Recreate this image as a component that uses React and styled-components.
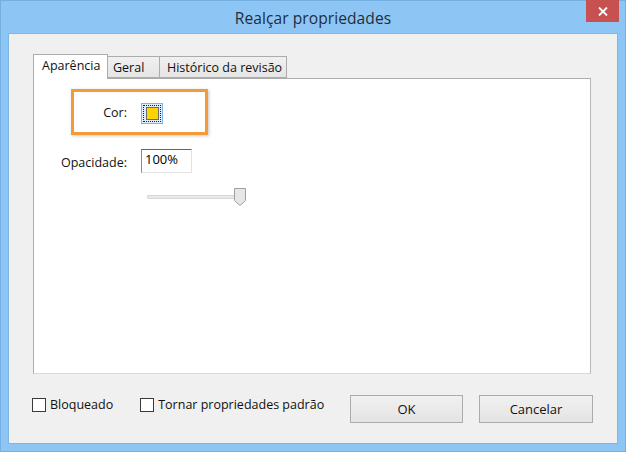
import React from "react";
import styled, { createGlobalStyle } from "styled-components";

const GlobalStyle = createGlobalStyle`
  html, body { margin: 0; padding: 0; background: #8dc6f5; }
  body { font-family: "Open Sans", "Noto Sans", sans-serif; }
  * { box-sizing: border-box; }
`;

const Window = styled.div`
  width: 626px;
  height: 452px;
  display: flex;
  flex-direction: column;
  background: #8dc6f5;
  border: 1px solid #74afe2;
  padding: 0 7px 7px 7px;
`;

const TitleBar = styled.div`
  height: 32px;
  display: grid;
  grid-template-columns: 1fr auto 1fr;
  align-items: center;
`;

const Title = styled.div`
  grid-column: 2;
  font-size: 15.6px;
  color: #1e2e3e;
  padding-top: 2px;
  letter-spacing: 0.05px;
`;

const CloseButton = styled.div`
  grid-column: 3;
  justify-self: end;
  align-self: start;
  width: 33px;
  height: 22px;
  margin-top: -1px;
  margin-right: -1px;
  background: #c75050;
  display: flex;
  align-items: center;
  justify-content: center;
`;

const Client = styled.div`
  flex: 1;
  display: flex;
  flex-direction: column;
  background: #f0f0f0;
  border: 1px solid #7fb6e6;
  padding: 20px 26px 20px 24px;
  font-size: 12.5px;
  color: #111;
`;

const TabStrip = styled.div`
  display: flex;
  align-items: flex-end;
  height: 24px;
  position: relative;
  z-index: 1;
`;

const Tab = styled.div`
  width: ${(p) => p.$w}px;
  height: ${(p) => (p.$active ? 25 : 22)}px;
  margin-bottom: ${(p) => (p.$active ? -1 : 0)}px;
  padding-left: ${(p) => p.$pl}px;
  display: flex;
  align-items: center;
  padding-bottom: ${(p) => (p.$active ? 3 : 0)}px;
  white-space: nowrap;
  border: 1px solid #acacac;
  border-bottom: ${(p) => (p.$active ? "none" : "1px solid #acacac")};
  border-left: ${(p) => (p.$first ? "1px solid #acacac" : p.$active ? "1px solid #acacac" : "none")};
  background: ${(p) =>
    p.$active ? "#ffffff" : "linear-gradient(#f0f0f0, #e5e5e5)"};
  color: #111;
`;

const Panel = styled.div`
  flex: 1;
  background: #ffffff;
  border: 1px solid #adadad;
  border-bottom-color: #d9d9d9;
  border-right-color: #b9b9b9;
  display: flex;
  flex-direction: column;
  align-items: flex-start;
`;

const Highlight = styled.div`
  margin: 10px 0 0 37px;
  width: 137px;
  height: 46px;
  border: 3px solid #f39a3b;
  box-shadow: 1px 1px 3px rgba(0, 0, 0, 0.22);
  display: flex;
  align-items: center;
`;

const Row = styled.div`
  display: flex;
  align-items: ${(p) => p.$align || "center"};
  margin-top: ${(p) => p.$mt || 0}px;
`;

const Label = styled.div`
  width: ${(p) => p.$w}px;
  text-align: right;
  margin-right: 14px;
  padding-top: ${(p) => p.$pt || 0}px;
  white-space: nowrap;
`;

const Swatch = styled.div`
  width: 22px;
  height: 21px;
  margin-top: 2px;
  border: 1px solid #7eb4ea;
  background: #dcecfc;
  padding: 1px;
  display: flex;
`;

const FocusRect = styled.div`
  flex: 1;
  border: 1px dotted #222;
  display: flex;
  align-items: center;
  justify-content: center;
`;

const ColorChip = styled.div`
  width: 13px;
  height: 13px;
  background: #ffd400;
  border: 1px solid #6b6b6b;
`;

const TextInput = styled.div`
  width: 51px;
  height: 24px;
  border-top: 1px solid #646464;
  border-left: 1px solid #8a8a8a;
  border-right: 1px solid #e2e2e2;
  border-bottom: 1px solid #e2e2e2;
  padding: 1px 0 0 3px;
  font-size: 13px;
  line-height: 17px;
  color: #000;
`;

const Slider = styled.div`
  position: relative;
  width: 99px;
  height: 18px;
  margin: 15px 0 0 113px;
`;

const Track = styled.div`
  position: absolute;
  left: 0;
  right: 8px;
  top: 7px;
  height: 4px;
  background: #e8e8e8;
  border: 1px solid #d8d8d8;
  border-radius: 1px;
`;

const Thumb = styled.svg`
  position: absolute;
  right: 0;
  top: 0;
`;

const Footer = styled.div`
  display: flex;
  align-items: flex-start;
  margin: 21px -2px 0 -1px;
`;

const CheckItem = styled.label`
  display: flex;
  align-items: center;
  margin-top: 1px;
  margin-right: ${(p) => p.$mr || 0}px;
  white-space: nowrap;
`;

const CheckBox = styled.span`
  width: 14px;
  height: 14px;
  border: 1px solid #3a3a3a;
  background: #fff;
  margin-right: 4px;
`;

const Buttons = styled.div`
  margin-left: auto;
  display: flex;
  gap: 16px;
`;

const Button = styled.div`
  width: ${(p) => p.$w}px;
  height: 28px;
  border: 1px solid #acacac;
  background: linear-gradient(#f1f1f1, #e4e4e4);
  display: flex;
  align-items: center;
  justify-content: center;
  font-size: 13px;
  color: #111;
`;

export default function App() {
  return (
    <>
      <GlobalStyle />
      <Window>
        <TitleBar>
          <Title>Realçar propriedades</Title>
          <CloseButton>
            <svg width="10" height="9" viewBox="0 0 10 9">
              <path d="M1 0.5 L9 8.5 M9 0.5 L1 8.5" stroke="#fff" strokeWidth="1.8" />
            </svg>
          </CloseButton>
        </TitleBar>
        <Client>
          <TabStrip>
            <Tab $active $first $w={75} $pl={8}>Aparência</Tab>
            <Tab $w={52} $pl={5}>Geral</Tab>
            <Tab $w={127} $pl={7}>Histórico da revisão</Tab>
          </TabStrip>
          <Panel>
            <Highlight>
              <Row>
                <Label $w={53}>Cor:</Label>
                <Swatch>
                  <FocusRect>
                    <ColorChip />
                  </FocusRect>
                </Swatch>
              </Row>
            </Highlight>
            <Row $align="flex-start" $mt={14}>
              <Label $w={93} $pt={5}>Opacidade:</Label>
              <TextInput>100%</TextInput>
            </Row>
            <Slider>
              <Track />
              <Thumb width="12" height="18" viewBox="0 0 12 18">
                <path
                  d="M0.5 0.5 H11.5 V12.5 L6 17.5 L0.5 12.5 Z"
                  fill="#e7e7e7"
                  stroke="#a0a0a0"
                />
              </Thumb>
            </Slider>
          </Panel>
          <Footer>
            <CheckItem $mr={27}>
              <CheckBox />
              Bloqueado
            </CheckItem>
            <CheckItem>
              <CheckBox />
              Tornar propriedades padrão
            </CheckItem>
            <Buttons>
              <Button $w={113}>OK</Button>
              <Button $w={114}>Cancelar</Button>
            </Buttons>
          </Footer>
        </Client>
      </Window>
    </>
  );
}
